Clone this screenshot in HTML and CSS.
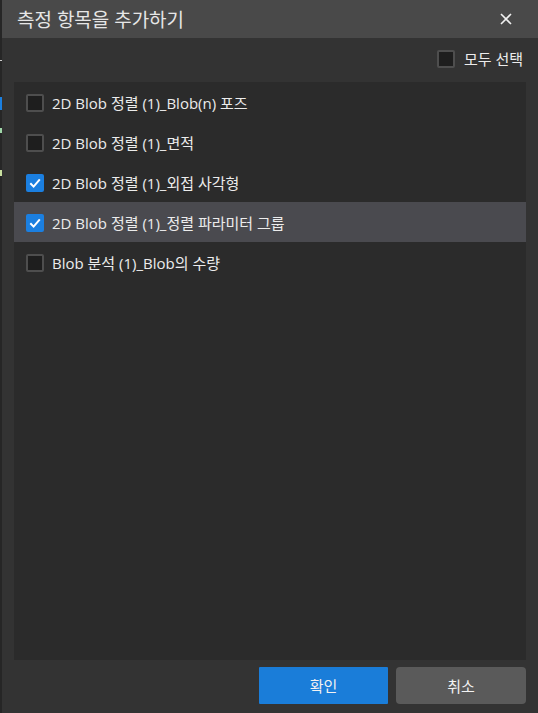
FILE: index.html
```html
<!DOCTYPE html>
<html lang="ko">
<head>
<meta charset="utf-8">
<title>측정 항목을 추가하기</title>
<link rel="stylesheet" href="styles.css">
</head>
<body>
<div class="edge">
  <span class="mark m1"></span>
  <span class="mark m2"></span>
  <span class="mark m3"></span>
  <span class="mark m4"></span>
</div>
<div class="dialog">
  <div class="titlebar">
    <span class="title">측정 항목을 추가하기</span>
    <span class="close">
      <svg width="12" height="12" viewBox="0 0 12 12"><path d="M1 1L11 11M11 1L1 11" stroke="#f0f0f0" stroke-width="1.6" fill="none"/></svg>
    </span>
  </div>
  <div class="toolbar">
    <label class="selall"><span class="cb"></span><span class="lbl">모두 선택</span></label>
  </div>
  <div class="list">
    <div class="row"><span class="cb"></span><span class="lbl">2D Blob 정렬 (1)_Blob(n) 포즈</span></div>
    <div class="row"><span class="cb"></span><span class="lbl">2D Blob 정렬 (1)_면적</span></div>
    <div class="row"><span class="cb on"><svg width="18" height="18" viewBox="0 0 18 18"><path d="M4.3 9.3L7.6 12.6L13.8 5.4" stroke="#fff" stroke-width="2" fill="none"/></svg></span><span class="lbl">2D Blob 정렬 (1)_외접 사각형</span></div>
    <div class="row hl"><span class="cb on"><svg width="18" height="18" viewBox="0 0 18 18"><path d="M4.3 9.3L7.6 12.6L13.8 5.4" stroke="#fff" stroke-width="2" fill="none"/></svg></span><span class="lbl">2D Blob 정렬 (1)_정렬 파라미터 그룹</span></div>
    <div class="row"><span class="cb"></span><span class="lbl">Blob 분석 (1)_Blob의 수량</span></div>
  </div>
  <div class="footer">
    <button class="btn primary">확인</button>
    <button class="btn secondary">취소</button>
  </div>
</div>
</body>
</html>
```
FILE: styles.css
```css
html, body {
  margin: 0;
  padding: 0;
}
body {
  width: 538px;
  height: 713px;
  background: #333333;
  display: flex;
  overflow: hidden;
  font-family: "Segoe UI", "Open Sans", "Noto Sans CJK KR", sans-serif;
  color: #e8e8e8;
}
.edge {
  width: 2px;
  background: #262626;
  position: relative;
  flex: none;
}
.mark {
  position: absolute;
  left: 0;
  width: 2px;
}
.m1 { top: 60px; height: 1px; background: #cfcfcf; }
.m2 { top: 97px; height: 13px; background: #1a7fe0; }
.m3 { top: 128px; height: 5px; background: #9fd6a8; }
.m4 { top: 170px; height: 6px; background: #c9e0a0; }
.dialog {
  flex: 1;
  display: flex;
  flex-direction: column;
}
.titlebar {
  height: 38px;
  background: #494949;
  display: flex;
  align-items: center;
  justify-content: space-between;
  padding: 0 26px 0 15px;
  flex: none;
}
.title {
  font-family: "Noto Sans CJK KR", sans-serif;
  font-size: 19px;
  color: #e6e6e6;
  letter-spacing: -0.1px;
  margin-top: -2px;
}
.close {
  display: flex;
  width: 12px;
  height: 12px;
  margin-top: -1px;
}
.toolbar {
  height: 44px;
  display: flex;
  align-items: center;
  justify-content: flex-end;
  padding-right: 15px;
  flex: none;
}
.selall {
  display: flex;
  align-items: center;
  gap: 9px;
  margin-top: -3px;
}
.cb {
  width: 18px;
  height: 18px;
  box-sizing: border-box;
  border: 2px solid #4e4e4e;
  border-radius: 2px;
  background: #1e1e1e;
  flex: none;
  display: flex;
  align-items: center;
  justify-content: center;
}
.cb.on {
  border: none;
  background: #1b7fe0;
}
.lbl {
  font-family: "Segoe UI", "Open Sans", "Noto Sans CJK KR", sans-serif;
  font-size: 15px;
  color: #ececec;
  white-space: nowrap;
}
.list {
  height: 578px;
  margin: 0 12px;
  background: #2b2b2b;
  flex: none;
}
.row {
  height: 40px;
  display: flex;
  align-items: center;
  gap: 8px;
  padding-left: 12px;
}
.row .cb {
  margin-top: 2px;
}
.row.hl {
  background: #4a4a4f;
}
.footer {
  flex: 1;
  display: flex;
  justify-content: flex-end;
  align-items: flex-start;
  gap: 8px;
  padding: 7px 12px 0 0;
}
.btn {
  width: 129px;
  height: 37px;
  border: none;
  font-family: "Noto Sans CJK KR", sans-serif;
  font-size: 15px;
  color: #f2f2f2;
  cursor: pointer;
}
.btn.primary {
  background: #1a7dd9;
  border-radius: 1px;
}
.btn.secondary {
  background: #5a5a5a;
  border-radius: 4px;
  width: 130px;
}
```
